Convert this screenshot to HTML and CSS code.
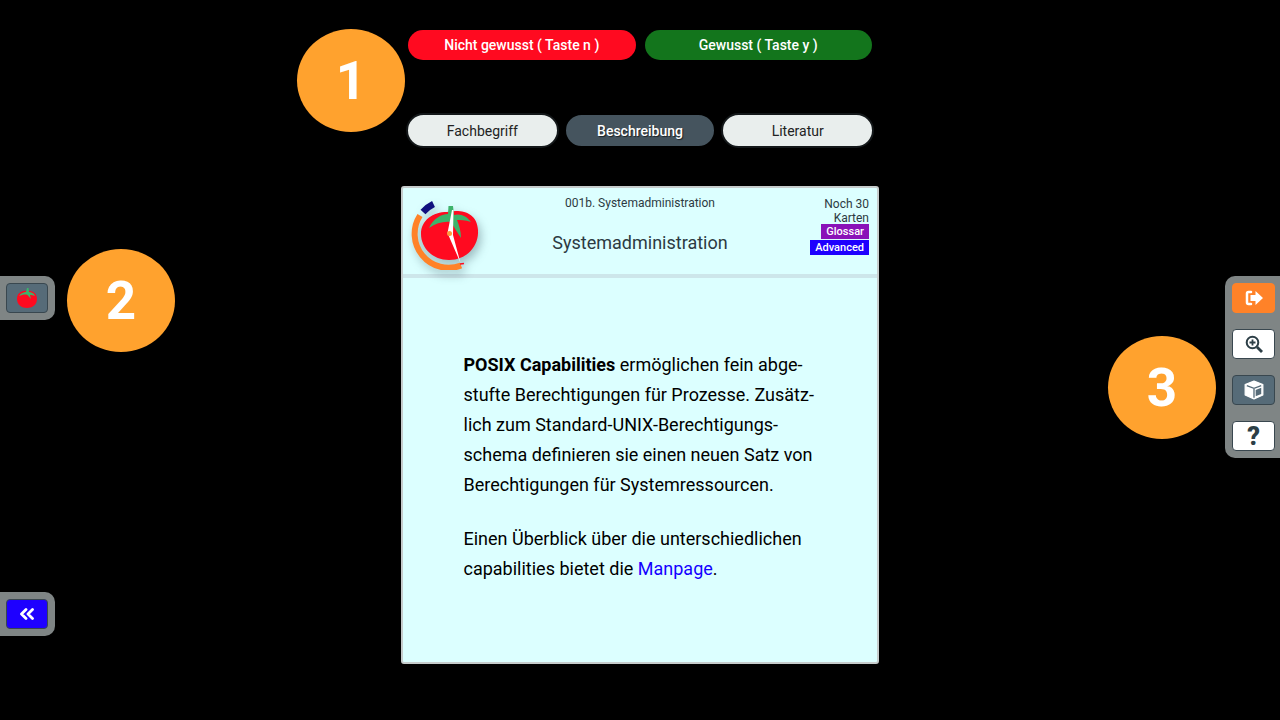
FILE: index.html
```html
<!DOCTYPE html>
<html lang="de">
<head>
    <meta charset="UTF-8">
    <meta name="viewport" content="width=device-width, initial-scale=1.0">
    <title>Karteikarten</title>
    <link rel="stylesheet" href="styles.css">
</head>
<body>
    <main class="stage">
        <div class="answer-row">
            <button class="pill pill-red">Nicht gewusst ( Taste n )</button>
            <button class="pill pill-green">Gewusst ( Taste y )</button>
        </div>
        <div class="tab-row">
            <button class="tab">Fachbegriff</button>
            <button class="tab tab-active">Beschreibung</button>
            <button class="tab">Literatur</button>
        </div>

        <section class="card">
            <header class="card-head">
                <svg class="logo" viewBox="0 0 70 72">
                    <path d="M22.500 6 A34 34 0 0 0 12 14" fill="none" stroke="#10107e" stroke-width="6.500"/>
                    <path d="M9 17.500 A34 34 0 0 0 50 67.500" fill="none" stroke="#ff8228" stroke-width="6"/>
                    <path d="M49 66 L53 65.500" stroke="#ff0a20" stroke-width="1.500"/>
                    <path d="M36 14 C50 11 66 14 67 32 C68 48 56 62 38 62 C22 62 10 50 10 36 C10 22 22 14 36 14 Z" fill="#ff0a20"/>
                    <path d="M18 30 C22 21 30 16 37 16 L37.500 8 L42 8 L43 17 C49 15 56 18 60 24 C54 22 49 22 46 22 C48 27 50 33 50 40 C46 34 43 29 40 24 C33 23 25 25 18 30 Z" fill="#3db36b"/>
                    <path d="M41 12 L36.500 35 L49.500 65 L42 37 L42.500 12 Z" fill="#fff"/>
                    <circle cx="38.500" cy="35.500" r="2.500" fill="#ff9a3c"/>
                </svg>
                <div class="head-center">
                    <div class="deck-name">001b. Systemadministration</div>
                    <h2 class="deck-title">Systemadministration</h2>
                </div>
                <div class="head-right">
                    <div class="count">Noch 30<br>Karten</div>
                    <span class="tag tag-purple">Glossar</span>
                    <span class="tag tag-blue">Advanced</span>
                </div>
            </header>
            <div class="card-body">
                <p><b>POSIX Capabilities</b> ermöglichen fein abge-<br>stufte Berechtigungen für Prozesse. Zusätz-<br>lich zum Standard-UNIX-Berechtigungs-<br>schema definieren sie einen neuen Satz von<br>Berechtigungen für Systemressourcen.</p>
                <p>Einen Überblick über die unterschiedlichen<br>capabilities bietet die <a href="#">Manpage</a>.</p>
            </div>
        </section>
    </main>

    <!-- left and right tool panels sit on the window edge -->
    <aside class="panel panel-pomodoro">
        <button class="tool tool-slate">
            <svg width="22" height="22" viewBox="0 0 22 22">
                <path d="M11 4 C17 3 21 7 21 12 C21 18 16 21 11 21 C6 21 1 18 1 12 C1 7 5 3 11 4 Z" fill="#ff0a20"/>
                <path d="M3 9 C5 6 8 5 10 5 L11 1 L12.500 1 L13 5 C15 5 18 6 19 9 C17 8 15 8 14 8 L15 12 L11.500 8 C9 7 6 8 3 9 Z" fill="#3db36b"/>
            </svg>
        </button>
    </aside>

    <aside class="panel panel-back">
        <button class="tool tool-blue">
            <svg width="16" height="12" viewBox="0 0 16 12">
                <path d="M7 1.500 L2.500 6 L7 10.500 M13.500 1.500 L9 6 L13.500 10.500" fill="none" stroke="#fff" stroke-width="2.800" stroke-linecap="round" stroke-linejoin="round"/>
            </svg>
        </button>
    </aside>

    <aside class="panel panel-tools">
        <button class="tool tool-orange">
            <svg width="18" height="16" viewBox="0 0 18 16">
                <path d="M6 2 H3.500 Q2 2 2 3.500 V12.500 Q2 14 3.500 14 H6" fill="none" stroke="#fff" stroke-width="2.500" stroke-linecap="round"/>
                <path d="M10.500 1 L18 8 L10.500 15 V11 H5.500 V5 H10.500 Z" fill="#fff"/>
            </svg>
        </button>
        <button class="tool tool-white">
            <svg width="18" height="18" viewBox="0 0 18 18">
                <circle cx="7.500" cy="7.500" r="5.800" fill="none" stroke="#2c3e46" stroke-width="2"/>
                <path d="M12 12 L17 17" stroke="#2c3e46" stroke-width="2.800"/>
                <path d="M4.500 7.500 H10.500 M7.500 4.500 V10.500" stroke="#2c3e46" stroke-width="1.800"/>
            </svg>
        </button>
        <button class="tool tool-slate">
            <svg width="20" height="20" viewBox="0 0 18 18">
                <path d="M9 1 L17 4 V13.500 L9 17 L1 13.500 V4 Z" fill="#fff" stroke="#fff" stroke-linejoin="round"/>
                <path d="M2.500 5 L9 7.500 L15.500 5 M9 7.500 V16" fill="none" stroke="#566b78" stroke-width="1.200"/>
                <path d="M10.500 9 L15.500 7 V12.500 L10.500 14.700 Z" fill="#566b78"/>
            </svg>
        </button>
        <button class="tool tool-white tool-help">?</button>
    </aside>

    <!-- numbered markers over the screenshot -->
    <div class="marker marker-1">1</div>
    <div class="marker marker-2">2</div>
    <div class="marker marker-3">3</div>
</body>
</html>
```

FILE: styles.css
```css
html, body {
    height: 100%;
}
body {
    margin: 0;
    padding: 0;
    background: #000;
    font-family: Roboto, 'Liberation Sans', sans-serif;
    color: #000;
    overflow: hidden;
}
button {
    font-family: inherit;
    cursor: pointer;
}
.stage {
    width: 478px;
    margin: 0 auto;
    padding-top: 30px;
    display: flex;
    flex-direction: column;
    align-items: center;
}
.answer-row {
    display: flex;
    gap: 9px;
    width: 464px;
}
.pill {
    flex: 1;
    height: 30px;
    padding: 0;
    border: none;
    border-radius: 15px;
    color: #fff;
    font-size: 14px;
    font-weight: 500;
}
.pill-red {
    background: #ff0a20;
}
.pill-green {
    background: #13751c;
}
.tab-row {
    display: flex;
    gap: 5px;
    width: 468px;
    margin-top: 53px;
}
.tab {
    flex: 1;
    height: 35px;
    padding: 0;
    border: 2px solid #14181a;
    border-radius: 18px;
    background: #e9eeed;
    color: #222;
    font-size: 14px;
}
.tab-active {
    background: #45545e;
    border-color: #000;
    color: #fff;
    font-weight: 500;
    text-shadow: 1px 1px 1px rgba(0, 0, 0, 0.6);
}
.card {
    width: 478px;
    height: 478px;
    margin-top: 38px;
    box-sizing: border-box;
    background: #dcffff;
    border: 2px solid #c6cccc;
    border-radius: 3px;
    display: flex;
    flex-direction: column;
}
.card-head {
    height: 86px;
    flex: none;
    border-bottom: 4px solid #cde6ea;
    display: grid;
    grid-template-columns: 1fr 220px 1fr;
}
.logo {
    width: 70px;
    height: 72px;
    margin: 10px 0 0 8px;
    filter: drop-shadow(3px 5px 5px rgba(40, 70, 80, 0.35));
}
.head-center {
    text-align: center;
    color: #2c3a42;
}
.deck-name {
    font-size: 12px;
    line-height: 14px;
    margin-top: 8px;
}
.deck-title {
    font-size: 18px;
    font-weight: 400;
    line-height: 20px;
    margin: 23px 0 0;
}
.head-right {
    padding: 9px 8px 0 0;
    display: flex;
    flex-direction: column;
    align-items: flex-end;
}
.count {
    font-size: 12px;
    line-height: 14px;
    margin-bottom: -2px;
    color: #2c3a42;
    text-align: right;
}
.tag {
    color: #fff;
    font-size: 11px;
    font-weight: 500;
    line-height: 15px;
    height: 15px;
    padding: 0 5px;
    margin-top: 1px;
}
.tag-purple {
    background: #8a12b8;
}
.tag-blue {
    background: #1e00ff;
}
.card-body {
    padding: 72px 20px 0 60.5px;
    font-size: 18px;
    line-height: 30px;
}
.card-body p {
    margin: 0 0 24px;
}
.card-body b {
    font-weight: 700;
}
.card-body a {
    color: #1400ff;
    text-decoration: none;
}
.panel {
    position: absolute;
    box-sizing: border-box;
    background: #7f8585;
    display: flex;
    flex-direction: column;
}
.panel-pomodoro, .panel-back {
    left: 0;
    width: 55px;
    height: 44px;
    padding: 7px 0 0 6px;
    border-radius: 0 10px 10px 0;
}
.panel-pomodoro {
    top: 276px;
}
.panel-back {
    top: 592px;
}
.panel-tools {
    right: 0;
    top: 276px;
    width: 55px;
    height: 182px;
    padding: 7px 0 0 7px;
    gap: 16px;
    border-radius: 10px 0 0 10px;
}
.tool {
    width: 43px;
    height: 30px;
    flex: none;
    padding: 0;
    border: 1px solid #39474f;
    border-radius: 4px;
    display: flex;
    align-items: center;
    justify-content: center;
}
.panel-pomodoro .tool, .panel-back .tool {
    width: 42px;
}
.tool-slate {
    background: #566b78;
}
.tool-blue {
    background: #1e00ff;
}
.tool-orange {
    background: #ff8228;
    border-color: #ff8228;
}
.tool-white {
    background: #fff;
}
.tool-help {
    color: #2c3e46;
    font-size: 25px;
    font-weight: 900;
}
.marker {
    position: absolute;
    width: 108px;
    height: 103px;
    border-radius: 50%;
    background: #ffa22e;
    color: #fff;
    font-size: 53px;
    font-weight: 700;
    display: flex;
    align-items: center;
    justify-content: center;
}
.marker-1 {
    left: 297px;
    top: 29px;
}
.marker-2 {
    left: 67px;
    top: 249px;
}
.marker-3 {
    left: 1108px;
    top: 336px;
}
```
